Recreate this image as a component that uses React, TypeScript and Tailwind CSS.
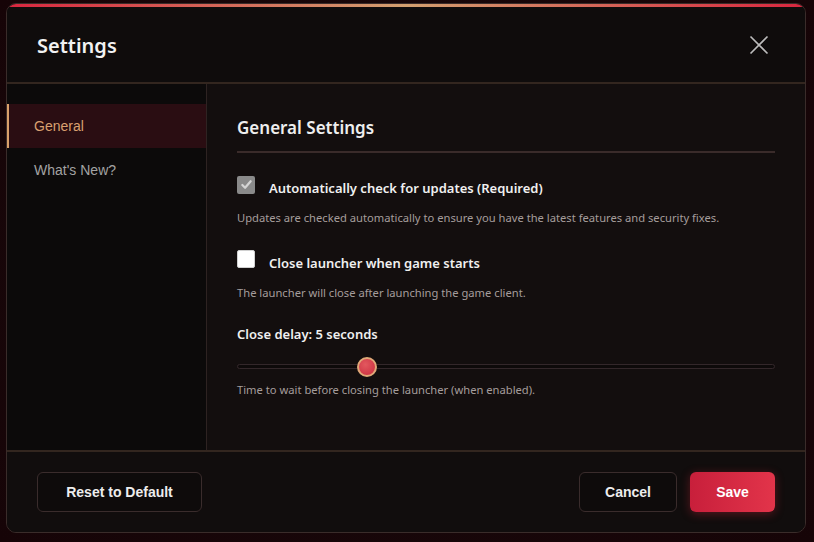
import React, { useState } from 'react';

const uiFont = { fontFamily: '"Noto Sans", "Open Sans", sans-serif' };

export default function App() {
  const [closeOnStart, setCloseOnStart] = useState(false);
  const [delay] = useState(5);

  return (
    <div className="w-full h-[542px] bg-[radial-gradient(ellipse_at_center,#1a0a0c_0%,#160407_100%)] pt-[3px] pl-[6px]">
      <div className="relative w-[800px] h-[530px] flex flex-col rounded-[10px] border border-[#3a2c2a] bg-[#110d0d] overflow-hidden">
        <div className="h-[3px] bg-[linear-gradient(90deg,#d8263f_0%,#d4a070_50%,#d8263f_100%)]" />

        {/* header */}
        <div className="h-[77px] flex items-center justify-between pl-[30px] pr-[36px] border-b-2 border-[#33261f] bg-[#0f0c0c]">
          <h1 className="text-[20px] font-semibold text-[#f2f2f2] leading-none mt-[2px]" style={uiFont}>Settings</h1>
          <button className="text-[#bdbdbd]">
            <svg width="20" height="20" viewBox="0 0 20 20" fill="none" stroke="currentColor" strokeWidth="1.6">
              <path d="M1.5 1.5 L18.5 18.5 M18.5 1.5 L1.5 18.5" />
            </svg>
          </button>
        </div>

        {/* body */}
        <div className="flex flex-1 min-h-0">
          <div className="w-[200px] bg-[#0c0a0a] border-r border-[#2e2322] pt-[20px] flex flex-col" style={{ fontFamily: '"Liberation Sans", Arial, sans-serif' }}>
            <div className="h-[44px] flex items-center pl-[25px] bg-[#2a0d12] border-l-2 border-[#d9a06a] text-[14px] text-[#d9a070]">General</div>
            <div className="h-[44px] flex items-center pl-[27px] text-[14px] text-[#a3a3a3]">What's New?</div>
          </div>

          <div className="flex-1 bg-[#130e0e] pl-[30px] pr-[30px] pt-[31px]" style={uiFont}>
            <h2 className="text-[17px] font-semibold text-[#eeeeee] pb-[10px] border-b-2 border-[#3a2b2a]">General Settings</h2>

            <div className="mt-[23px] flex items-start gap-[14px]">
              <div className="w-[18px] h-[18px] rounded-[2px] bg-[#8a8a8a] flex items-center justify-center">
                <svg width="13" height="13" viewBox="0 0 14 14" fill="none" stroke="#d4d4d4" strokeWidth="2.4" strokeLinecap="round" strokeLinejoin="round">
                  <path d="M2.5 7.5 L5.5 10.5 L11.5 3.5" />
                </svg>
              </div>
              <span className="text-[13px] font-semibold text-[#f0f0f0] mt-[3px]">Automatically check for updates (Required)</span>
            </div>
            <p className="mt-[12px] text-[11.2px] text-[#a59d9c]">Updates are checked automatically to ensure you have the latest features and security fixes.</p>

            <div className="mt-[23px] flex items-start gap-[14px]">
              <button
                onClick={() => setCloseOnStart(!closeOnStart)}
                className="w-[18px] h-[18px] rounded-[2px] bg-white border border-[#d0d0d0]"
              />
              <span className="text-[13px] font-semibold text-[#f0f0f0] mt-[4px]">Close launcher when game starts</span>
            </div>
            <p className="mt-[12px] text-[11.2px] text-[#a59d9c]">The launcher will close after launching the game client.</p>

            <p className="mt-[23px] text-[13px] font-semibold text-[#f0f0f0]">Close delay: {delay} seconds</p>
            <div className="relative mt-[13px] h-[18px] flex items-center">
              <div className="w-full h-[5px] rounded-full bg-[#0e0a0a] border border-[#33272a]" />
              <div
                className="absolute top-0 w-[20px] h-[20px] -mt-[1px] rounded-full border-2 border-[#e0a878] bg-[radial-gradient(circle_at_40%_35%,#e2585e_0%,#c92c3e_100%)]"
                style={{ left: `${((delay - 1) / 17) * 510}px` }}
              />
            </div>
            <p className="mt-[6px] text-[11.2px] text-[#a59d9c]">Time to wait before closing the launcher (when enabled).</p>
          </div>
        </div>

        {/* footer */}
        <div className="h-[82px] shrink-0 border-t-2 border-[#33261f] bg-[#110d0d] flex items-center justify-between pl-[30px] pr-[30px]" style={{ fontFamily: '"Liberation Sans", Arial, sans-serif' }}>
          <button className="h-[40px] w-[165px] rounded-[6px] border border-[#3a2c2c] bg-[#0e0b0b] text-[14px] font-bold text-[#ededed]">Reset to Default</button>
          <div className="flex gap-[13px]">
            <button className="h-[40px] w-[98px] rounded-[6px] border border-[#3a2c2c] bg-[#0e0b0b] text-[14px] font-bold text-[#ededed]">Cancel</button>
            <button className="h-[40px] w-[85px] rounded-[6px] bg-[linear-gradient(90deg,#c81f3b_0%,#e2344a_100%)] text-[14px] font-bold text-white shadow-[0_2px_10px_rgba(220,40,60,0.35)]">Save</button>
          </div>
        </div>
      </div>
    </div>
  );
}
